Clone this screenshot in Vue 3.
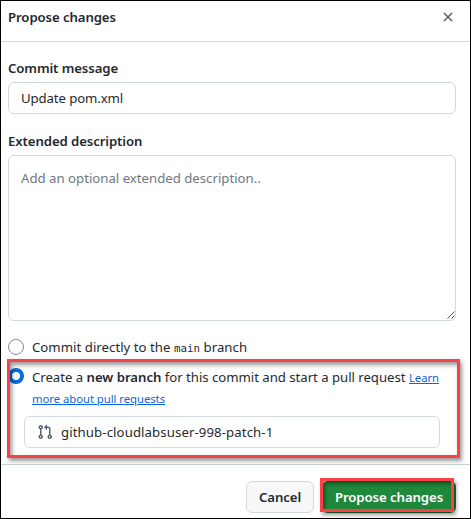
<script setup>
import { ref } from 'vue'

const message = ref('Update pom.xml')
const description = ref('')
const branch = ref('github-cloudlabsuser-998-patch-1')
const target = ref('new')
</script>

<template>
  <main class="dialog">
    <header class="header">
      <h1 class="title">Propose changes</h1>
      <button class="close" aria-label="Close">
        <svg width="16" height="16" viewBox="0 0 16 16"><path fill="currentColor" d="M3.72 3.72a.75.75 0 0 1 1.06 0L8 6.94l3.22-3.22a.75.75 0 1 1 1.06 1.06L9.06 8l3.22 3.22a.75.75 0 1 1-1.06 1.06L8 9.06l-3.22 3.22a.75.75 0 0 1-1.06-1.06L6.94 8 3.72 4.78a.75.75 0 0 1 0-1.06Z" /></svg>
      </button>
    </header>
    <section class="body">
      <label class="label" for="msg">Commit message</label>
      <input id="msg" v-model="message" class="field" />
      <label class="label second" for="desc">Extended description</label>
      <div class="area-wrap">
        <textarea id="desc" v-model="description" class="field area" placeholder="Add an optional extended description.."></textarea>
        <svg class="grip" width="8" height="8" viewBox="0 0 8 8"><path d="M.5 7.5l7-7M4.5 7.5l3-3" stroke="#555" stroke-width="1" fill="none" /></svg>
      </div>
      <label class="choice direct">
        <input v-model="target" type="radio" value="main" class="radio" />
        <span class="direct-text">Commit directly to the <code>main</code> branch</span>
      </label>
      <div class="new-branch">
        <label class="choice">
          <input v-model="target" type="radio" value="new" class="radio" />
          <span class="choice-text">
            <span class="create">Create a <b>new branch</b> for this commit and start a pull request</span> <a>Learn</a><br /><a>more about pull requests</a>
          </span>
        </label>
        <div class="branch-field">
          <svg width="16" height="16" viewBox="0 0 16 16"><path fill="currentColor" d="M1.5 3.25a2.25 2.25 0 1 1 3 2.122v5.256a2.251 2.251 0 1 1-1.5 0V5.372A2.25 2.25 0 0 1 1.5 3.25Zm5.677-.177L9.573.677A.25.25 0 0 1 10 .854V2.5h1A2.5 2.5 0 0 1 13.5 5v5.628a2.251 2.251 0 1 1-1.5 0V5a1 1 0 0 0-1-1h-1v1.646a.25.25 0 0 1-.427.177L7.177 3.427a.25.25 0 0 1 0-.354ZM3.75 2.5a.75.75 0 1 0 0 1.5.75.75 0 0 0 0-1.5Zm0 9.5a.75.75 0 1 0 0 1.5.75.75 0 0 0 0-1.5Zm8.25.75a.75.75 0 1 0 1.5 0 .75.75 0 0 0-1.5 0Z" /></svg>
          <input v-model="branch" aria-label="Branch name" />
        </div>
        <div class="mark mark-branch"></div>
      </div>
    </section>
    <footer class="footer">
      <button class="btn cancel">Cancel</button>
      <div class="submit">
        <button class="btn primary">Propose changes</button>
        <div class="mark mark-submit"></div>
      </div>
    </footer>
  </main>
</template>

<style>
body { margin: 0; background: #fff; }
</style>

<style scoped>
* { box-sizing: border-box; }
.dialog {
  width: 471px; height: 519px; border: 1px solid #000; background: #fff; overflow: hidden;
  display: flex; flex-direction: column; color: #25292e;
  font-family: "Noto Sans", "Open Sans", sans-serif; font-size: 13.2px; line-height: 20px;
}
input, textarea, button { font: inherit; color: inherit; letter-spacing: inherit; }
.header {
  height: 41px; flex: none; padding: 6px 14px 0 7px; border-bottom: 1px solid #d1d9e0;
  display: flex; justify-content: space-between; align-items: flex-start;
}
.title, .label { margin: 0; font-size: 13.2px; line-height: 20px; font-weight: 600; letter-spacing: -.1px; }
.close { width: 16px; height: 20px; padding: 2px 0 0; border: 0; background: none; color: #59636e; display: flex; }
.body { height: 423px; flex: none; padding: 16px 14px 0 7px; border-bottom: 1px solid #c8d1da; display: flex; flex-direction: column; }
.field {
  width: 448px; height: 32px; flex: none; margin: 4px 0 0; padding: 0 12px; border: 1px solid #d1d9e0;
  border-radius: 6px; background: #fff; outline: 0;
}
#msg { letter-spacing: -.1px; }
.second { margin-top: 17px; }
.area-wrap { position: relative; height: 170px; flex: none; }
.area { display: block; height: 166px; padding: 12px; resize: none; }
.area::placeholder { color: #6e7781; opacity: 1; }
.grip { position: absolute; left: 439px; bottom: 2px; }
.choice { display: flex; gap: 8px; }
.direct { margin-top: 17px; height: 20px; }
.direct-text { margin-top: -1px; letter-spacing: .03px; }
.radio {
  appearance: none; flex: none; width: 16px; height: 16px; margin: 1px 0 0; border: 1px solid #818b98;
  border-radius: 50%; background: #fff;
}
.radio:checked { border: 4px solid #0969da; }
code { font-family: "DejaVu Sans Mono", monospace; font-size: 10.8px; }
.new-branch { position: relative; margin-top: 9px; }
.choice-text { white-space: nowrap; line-height: 21px; }
.create { letter-spacing: -.03px; }
b { font-weight: 600; }
a { font-size: 11.3px; line-height: 19px; letter-spacing: -.04px; color: #0969da; text-decoration: underline; }
.branch-field {
  width: 416px; height: 32px; margin: 7px 0 0 16px; padding: 0 12px; border: 1px solid #d1d9e0;
  border-radius: 6px; display: flex; align-items: center; gap: 8px; color: #59636e;
}
.branch-field input { flex: 1; min-width: 0; padding: 0; border: 0; background: none; outline: 0; color: #25292e; letter-spacing: .1px; }
.mark { position: absolute; border: 3px solid #fa4145; pointer-events: none; box-shadow: 2px 3px 4px rgba(0, 0, 0, .4), inset 2px 3px 4px rgba(0, 0, 0, .4); }
.mark-branch { left: -1px; top: -8px; width: 453px; height: 99px; }
.footer { display: flex; justify-content: flex-end; gap: 8px; padding: 16px 14px 0 0; }
.btn { height: 32px; padding: 0; border: 1px solid #d1d9e0; border-radius: 6px; font-weight: 600; line-height: 20px; white-space: nowrap; letter-spacing: -.08px; }
.cancel { width: 68px; background: #f6f8fa; }
.submit { position: relative; }
.primary { display: block; width: 134px; background: #1f883d; border-color: #1b7735; color: #fff; }
.mark-submit { left: -2px; top: -3px; width: 134px; height: 34px; }
</style>
